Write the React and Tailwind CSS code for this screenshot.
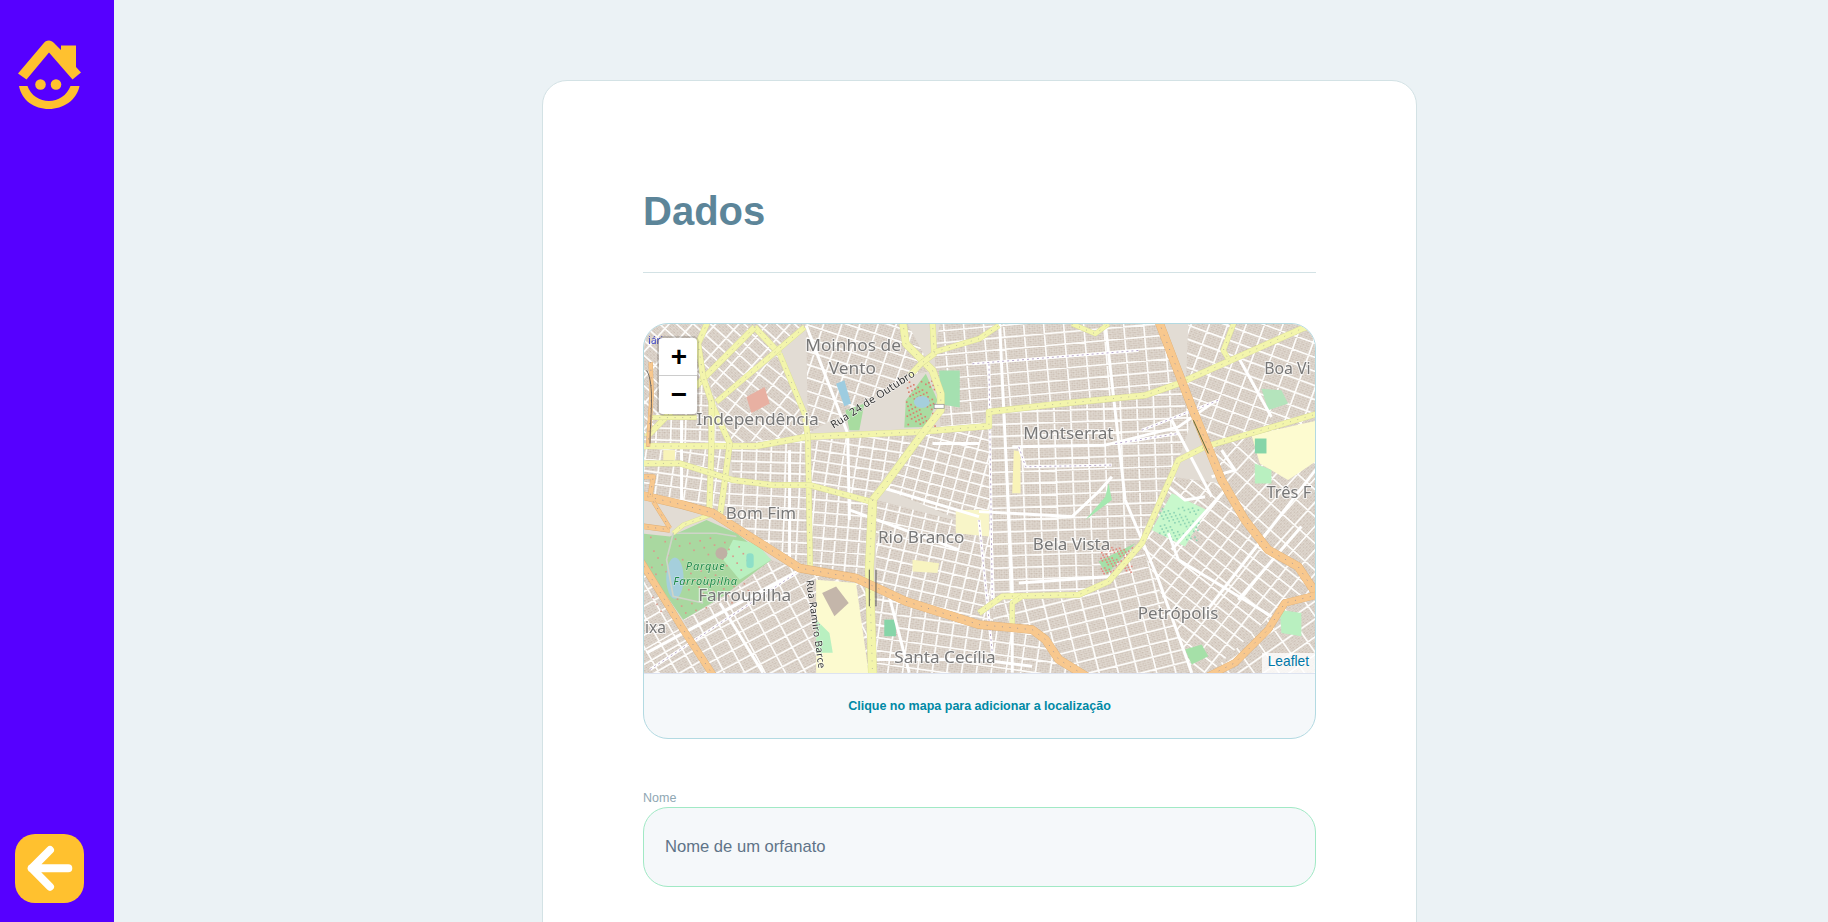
import React from 'react';

// map coordinates are 3x page pixels
// each district is a patch of the street grid bounded by the main roads
const districts = [
  { poly: '0,0 345,0 200,165 0,370', angle: 42, a: 52, b: 34 },
  { poly: '345,0 500,0 495,20 230,245 200,165', angle: 42, a: 50, b: 36 },
  { poly: '420,100 230,245 270,370 500,350 495,280', angle: 38, a: 54, b: 38 },
  { poly: '500,0 800,0 880,150 812,165 505,340', angle: 18, a: 52, b: 38 },
  { poly: '0,370 20,350 200,170 270,370', angle: 2, a: 44, b: 36 },
  { poly: '270,370 500,350 510,495 280,480', angle: 2, a: 44, b: 32 },
  { poly: '0,380 270,380 250,520 240,590 130,555 0,530', angle: 8, a: 44, b: 36 },
  { poly: '250,485 510,500 512,745 330,650 240,590', angle: 3, a: 42, b: 34 },
  { poly: '515,360 840,338 720,490 695,545 515,500', angle: 9, a: 42, b: 32 },
  { poly: '515,500 695,550 690,775 515,745', angle: 5, a: 36, b: 38 },
  { poly: '720,500 850,340 1050,320 1060,640', angle: 15, a: 38, b: 34 },
  { poly: '710,540 1060,630 1065,920 800,845 710,790', angle: 13, a: 40, b: 36 },
  { poly: '905,0 1560,0 1650,190 1520,225 1220,255 1050,275 1020,320 905,320 885,90', angle: -5, a: 60, b: 36 },
  { poly: '1050,275 1220,255 1520,225 1650,190 1660,300 1620,420 1580,510 1510,670 1410,785 1320,825 1090,830 1060,880', angle: -2, a: 50, b: 36 },
  { poly: '1070,840 1320,835 1410,795 1510,680 1560,780 1670,1075 1350,1075 1260,1020 1180,930 1060,920', angle: -14, a: 56, b: 38 },
  { poly: '1510,680 1600,470 1750,490 1890,690 1980,740 2040,820 1940,850 1790,1030 1700,1075 1670,1075', angle: 38, a: 48, b: 36 },
  { poly: '1650,0 2040,0 2040,280 1700,380 1640,260', angle: 20, a: 52, b: 40 },
  { poly: '1760,490 1700,380 2040,285 2040,820 1980,740 1890,690', angle: -48, a: 60, b: 48 },
  { poly: '0,740 130,930 225,1075 0,1075', angle: -30, a: 48, b: 38 },
  { poly: '130,900 260,830 395,720 480,750 650,780 690,800 690,1075 225,1075', angle: -28, a: 54, b: 38 },
  { poly: '700,800 1060,920 1180,940 1260,1020 1350,1075 700,1075', angle: 8, a: 44, b: 38 },
  { poly: '1940,850 2040,830 2040,1075 1700,1075', angle: -35, a: 62, b: 44 },
];

function centerOf(poly) {
  const pts = poly.split(' ').map((p) => p.split(',').map(Number));
  const xs = pts.map((p) => p[0]);
  const ys = pts.map((p) => p[1]);
  return [(Math.min(...xs) + Math.max(...xs)) / 2, (Math.min(...ys) + Math.max(...ys)) / 2];
}

function District({ d, i }) {
  const [cx, cy] = centerOf(d.poly);
  const R = 700;
  const lines = [];
  for (let x = -R; x <= R; x += d.a) lines.push(`M${cx + x} ${cy - R}V${cy + R}`);
  for (let y = -R; y <= R; y += d.b) lines.push(`M${cx - R} ${cy + y}H${cx + R}`);
  return (
    <g>
      <clipPath id={`district-${i}`}>
        <polygon points={d.poly} />
      </clipPath>
      <pattern id={`blocks-${i}`} width="15" height="13" patternUnits="userSpaceOnUse" patternTransform={`rotate(${d.angle})`}>
        <rect width="15" height="13" fill="#e9e4dd" />
        <rect x="1" y="1" width="6" height="5" fill="#cbbeb3" />
        <rect x="8" y="1" width="6" height="4" fill="#d2c7bc" />
        <rect x="1" y="7" width="5" height="5" fill="#d3c8be" />
        <rect x="7" y="7" width="7" height="5" fill="#c9bcb0" />
      </pattern>
      <polygon points={d.poly} fill={`url(#blocks-${i})`} />
      <g clipPath={`url(#district-${i})`}>
        <path d={lines.join('')} transform={`rotate(${d.angle} ${cx} ${cy})`} stroke="#fdfcfa" strokeWidth="5" fill="none" />
      </g>
    </g>
  );
}

const whiteRoads = [
  '500,15 625,340 630,600',
  '450,390 450,730',
  '125,300 125,540',
  '720,500 1020,590',
  '630,570 960,690',
  '880,370 1020,370',
  '20,1000 500,740',
  '240,850 370,1060',
  '750,830 810,1060',
  '690,1020 1020,1020 1180,1040',
  '1082,10 1120,800 1120,1060',
  '1120,380 1400,375 1620,320 1720,250',
  '1020,575 1300,590 1380,515 1420,470',
  '1400,10 1460,540 1560,780 1660,1060',
  '1140,790 1420,770',
  '1590,640 1620,720 1900,890',
  '1600,690 1760,510',
  '1700,880 2040,440',
  '1800,840 1990,620',
  '1800,110 1900,290',
  '1600,300 1720,530',
  '1750,390 1790,450 1720,470',
  '1590,500 1640,540 1700,530',
];

const parkPaths = [
  '100,640 80,720 100,830 190,850',
  '100,640 230,640 290,650',
];

const dottedStreets = [
  '1000,130 1500,90',
  '1050,130 1060,840',
  '1140,380 1160,440 1420,435',
  '1510,330 1740,240',
  '1430,370 1620,340',
  '1020,600 1060,1000',
  '30,1050 470,760',
];

const parks = [
  { points: '0,640 90,650 200,600 290,640 395,720 250,830 130,900 60,800 0,720', fill: '#a9d8a0' },
  { points: '280,660 350,670 395,720 300,780 250,720', fill: '#b9f0c0' },
  { points: '800,240 860,160 895,240 860,320 795,322', fill: '#a9dca1' },
  { points: '900,150 962,150 962,262 905,252', fill: '#a5e0b0' },
  { points: '618,270 675,250 660,330 630,330', fill: '#a8dca0' },
  { points: '1600,520 1705,570 1640,680 1540,630', fill: '#c8f8cc' },
  { points: '1410,490 1420,540 1340,600 1400,530', fill: '#a5e8b0' },
  { points: '1380,725 1490,670 1405,765', fill: '#a5e0a8' },
  { points: '1870,205 1930,210 1950,250 1890,270', fill: '#b4e4bc' },
  { points: '1640,990 1690,975 1710,1010 1660,1035', fill: '#a5e0a8' },
  { points: '1925,870 1990,880 1990,950 1930,940', fill: '#b9f0c0' },
  { points: '1850,430 1900,450 1900,490 1850,490', fill: '#b9f0c0' },
  { points: '530,900 570,940 580,1000 530,1000', fill: '#b9f0c0' },
];

// red and dark speckle of trees over the parks
const speckleAreas = [
  [30, 650, 330, 880, '#d99b8c'],
  [800, 180, 890, 320, '#d9806f'],
  [1385, 680, 1480, 760, '#e08c80'],
  [1560, 560, 1680, 660, '#8ed4b4'],
];
const speckles = [];
speckleAreas.forEach(([x0, y0, x1, y1, fill], a) => {
  for (let i = 0; i < 70; i++) {
    speckles.push({
      x: x0 + ((i * 37 + a * 11) % 97) / 97 * (x1 - x0),
      y: y0 + ((i * 61 + a * 29) % 89) / 89 * (y1 - y0),
      fill,
    });
  }
});

const schools = [
  { points: '530,780 650,790 690,1075 530,1075', fill: '#fcfacf' },
  { points: '1840,345 2040,300 2040,420 1950,480 1865,430', fill: '#fdfbd0' },
  { points: '950,570 1050,570 1050,650 950,640', fill: '#f8f5c8' },
  { points: '820,720 900,730 895,760 820,755', fill: '#f8f4c0' },
  { points: '1125,390 1145,395 1145,520 1120,520', fill: '#f9f3b8' },
  { points: '70,390 105,390 105,420 70,420', fill: '#f8f3b8' },
];

const yellowRoads = [
  { d: '0,378 350,378 500,350 840,335 1020,320 1050,318 1050,275 1220,255 1520,225 1620,190 1990,25 2040,10', w: 17 },
  { d: '700,540 740,490 850,340 905,270 905,220 880,150 800,70 790,0', w: 21 },
  { d: '880,0 885,100 845,130 812,165', w: 16 },
  { d: '885,95 1020,55 1080,15', w: 15 },
  { d: '420,100 495,280 505,350 512,745', w: 15 },
  { d: '345,20 420,100', w: 17 },
  { d: '345,20 200,165 20,350', w: 17 },
  { d: '495,20 230,245', w: 15 },
  { d: '205,0 175,70 190,170 220,260 270,370 250,520 240,590', w: 16 },
  { d: '215,240 215,380 208,585', w: 16 },
  { d: '0,430 120,430 280,480 400,495 510,495 695,545', w: 16 },
  { d: '35,292 170,292', w: 12 },
  { d: '100,640 130,615 210,585', w: 12 },
  { d: '1020,880 1090,830 1320,825 1410,785 1510,670 1580,510 1620,420 1700,380 2040,280', w: 16 },
  { d: '1120,920 1120,850 1150,830', w: 14 },
  { d: '1300,10 1370,40 1410,10', w: 13 },
  { d: '1790,0 1755,90 1770,115', w: 14 },
  { d: '700,540 690,750 700,1075', w: 25 },
];

const orangeRoads = [
  { d: '0,525 130,555 220,580 330,650 480,745 650,775 800,845 1020,915 1180,930 1220,960 1260,1020 1350,1075', w: 24 },
  { d: '0,720 130,930 225,1075', w: 20 },
  { d: '0,618 90,630', w: 15 },
  { d: '40,545 90,625', w: 11 },
  { d: '32,125 35,220 24,380', w: 11 },
  { d: '0,470 40,470 30,530', w: 13 },
  { d: '1560,0 1660,260 1750,480 1820,600 1890,690 1980,740 2040,830', w: 24 },
  { d: '1700,1075 1790,1030 1890,930 1940,850 2040,825', w: 20 },
];

const labels = [
  ['Moinhos de', 497, 92, 288],
  ['Vento', 568, 160, 142],
  ['Independência', 170, 313, 368],
  ['Bom Fim', 258, 596, 212],
  ['Rio Branco', 716, 668, 260],
  ['Farroupilha', 175, 845, 280],
  ['ixa', 15, 940, 63],
  ['Santa Cecília', 765, 1030, 305],
  ['Montserrat', 1153, 357, 272],
  ['Bela Vista', 1182, 690, 233],
  ['Petrópolis', 1498, 897, 242],
  ['Três F', 1885, 535, 135],
  ['Boa Vi', 1878, 160, 140],
];

function CityMap() {
  const halo = { paintOrder: 'stroke' };
  return (
    <svg viewBox="0 0 673 349" className="block h-[349px] w-full blur-[0.5px]">
      <g transform="translate(-4,-4) scale(0.33333)">
        <rect x="0" y="0" width="2040" height="1075" fill="#e2dcd4" />
        {districts.map((d, i) => <District key={d.poly} d={d} i={i} />)}
        {schools.map((s) => <polygon key={s.points} points={s.points} fill={s.fill} />)}
        {parks.map((p) => <polygon key={p.points} points={p.points} fill={p.fill} />)}
        {speckles.map((s, i) => <rect key={i} x={s.x} y={s.y} width="5" height="5" fill={s.fill} />)}

        <ellipse cx="105" cy="775" rx="26" ry="62" fill="#a5cfdc" />
        <ellipse cx="848" cy="245" rx="24" ry="18" fill="#a5cfdc" />
        <polygon points="590,190 615,180 635,250 615,258" fill="#9dcce0" />
        <rect x="320" y="700" width="22" height="45" rx="10" fill="#8ddfc8" />
        <circle cx="245" cy="700" r="18" fill="#bfb0a4" />
        <polygon points="320,230 375,200 390,250 335,278" fill="#e8b0a2" />
        <polygon points="1850,355 1885,355 1885,400 1850,400" fill="#86d5a8" />
        <polygon points="735,900 770,900 770,950 735,950" fill="#86d5a8" />
        <polygon points="548,820 590,800 628,850 585,890" fill="#c4b6aa" />

        {parkPaths.map((d) => <polyline key={d} points={d} fill="none" stroke="#cfd4c8" strokeWidth="5" />)}
        {whiteRoads.map((d) => <polyline key={d} points={d} fill="none" stroke="#ffffff" strokeWidth="9" strokeLinejoin="round" />)}
        {dottedStreets.map((d) => (
          <g key={d}>
            <polyline points={d} fill="none" stroke="#fff" strokeWidth="9" />
            <polyline points={d} fill="none" stroke="#b9a8cc" strokeWidth="3" strokeDasharray="6 9" />
          </g>
        ))}

        {yellowRoads.map((r) => (
          <g key={r.d}>
            <polyline points={r.d} fill="none" stroke="#d8dc96" strokeWidth={r.w + 2} strokeLinejoin="round" />
            <polyline points={r.d} fill="none" stroke="#f3f5ac" strokeWidth={r.w} strokeLinejoin="round" />
            <polyline points={r.d} fill="none" stroke="#b4b49c" strokeWidth="2.500" strokeDasharray="3 20" />
          </g>
        ))}
        {orangeRoads.map((r) => (
          <g key={r.d}>
            <polyline points={r.d} fill="none" stroke="#dcae76" strokeWidth={r.w + 2} strokeLinejoin="round" />
            <polyline points={r.d} fill="none" stroke="#f8c88e" strokeWidth={r.w} strokeLinejoin="round" />
            <polyline points={r.d} fill="none" stroke="#a89a98" strokeWidth="3" strokeDasharray="3 20" />
          </g>
        ))}

        <path d="M690 750V860M710 750V860" stroke="#555" strokeWidth="3" fill="none" />
        <path d="M1665 300L1710 400" stroke="#5d6a38" strokeWidth="3" fill="none" />
        <rect x="885" y="252" width="30" height="12" fill="#fff" stroke="#888" strokeWidth="2" />
        <path d="M20 150C45 190 30 300 30 370" stroke="#555" strokeWidth="2.500" fill="none" />

        {labels.map(([text, x, y, w]) => (
          <text
            key={text + x}
            x={x}
            y={y}
            textLength={w}
            lengthAdjust="spacingAndGlyphs"
            fontFamily="'Noto Sans', 'Open Sans', sans-serif"
            fontSize="48"
            fill="#777777"
            stroke="#ffffff"
            strokeOpacity="0.7"
            strokeWidth="6"
            style={halo}
          >
            {text}
          </text>
        ))}
        <text x="138" y="750" textLength="117" fontFamily="'Noto Sans', sans-serif" fontStyle="italic" fontSize="33" fill="#1f8a48" stroke="#ffffff" strokeOpacity="0.5" strokeWidth="3" style={halo}>Parque</text>
        <text x="100" y="795" textLength="192" fontFamily="'Noto Sans', sans-serif" fontStyle="italic" fontSize="33" fill="#1f8a48" stroke="#ffffff" strokeOpacity="0.5" strokeWidth="3" style={halo}>Farroupilha</text>
        <text x="0" y="0" transform="translate(582,326) rotate(-33)" textLength="295" fontFamily="'Noto Sans', sans-serif" fontSize="32" fill="#333" stroke="#ffffff" strokeOpacity="0.7" strokeWidth="4" style={halo}>Rua 24 de Outubro</text>
        <text x="0" y="0" transform="translate(500,782) rotate(82)" textLength="268" fontFamily="'Noto Sans', sans-serif" fontSize="30" fill="#333" stroke="#ffffff" strokeOpacity="0.7" strokeWidth="4" style={halo}>Rua Ramiro Barce</text>
        <text x="25" y="72" fontFamily="'Noto Sans', sans-serif" fontSize="30" fill="#3f48c8">iário</text>
      </g>
    </svg>
  );
}

function Logo() {
  return (
    <svg viewBox="0 0 63 69" className="h-[69px] w-[63px]" fill="#ffc12f">
      <path d="M0 33.500L25 4C28 -0.500 33 -0.500 36 3L43 10V5.500H58V27L63 32.500L54.500 39.500L31 12.500L8.500 39.500Z" />
      <circle cx="22.500" cy="44.500" r="5.300" />
      <circle cx="38" cy="44.500" r="5.300" />
      <path d="M1 46H9.500C12.500 55.500 22 61 31 61C40 61 49 55.500 52.500 46H61.500C58.500 60.500 45 69 31 69C16 69 4 60.500 1 46Z" />
    </svg>
  );
}

function BackArrow() {
  return (
    <svg viewBox="0 0 69 69" className="h-[69px] w-[69px]" fill="none" stroke="#ffffff" strokeWidth="8" strokeLinecap="round" strokeLinejoin="round">
      <path d="M35 16L16.700 34.300L35 52.700M16.700 34.300H53.300" />
    </svg>
  );
}

export default function App() {
  return (
    <div className="flex h-screen overflow-hidden bg-[#ebf2f5] font-['Liberation_Sans',Arial,sans-serif]">
      <aside className="flex h-full w-[114px] shrink-0 flex-col items-start justify-between bg-[#5600ff] pb-[19px] pl-[15px] pt-[40px]">
        <div className="pl-[3px]">
          <Logo />
        </div>
        <button className="flex h-[69px] w-[69px] items-center justify-center rounded-[20px] bg-[#ffc12f]">
          <BackArrow />
        </button>
      </aside>

      <main className="flex-1">
        <div className="ml-[428px] mt-[80px] w-[875px] rounded-[25px] border border-[#d3e2e5] bg-white px-[100px] pb-[100px] pt-[107px]">
          <h2 className="border-b border-[#d3e2e5] pb-[38px] text-[40px] font-bold leading-[46px] text-[#5c8599]">Dados</h2>

          <div className="mt-[50px] overflow-hidden rounded-[25px] border border-[#b3dae2] bg-[#f5f8fa]">
            <div className="relative h-[349px]">
              <CityMap />
              <div className="absolute left-[13px] top-[12px] w-[42px] overflow-hidden rounded-[6px] border-2 border-black/15 bg-clip-padding">
                <div className="flex h-[38px] items-center justify-center border-b border-[#ccc] bg-white pl-[2px] text-[28px] font-bold leading-none text-black">+</div>
                <div className="flex h-[38px] items-center justify-center bg-white pl-[2px] text-[28px] font-bold leading-none text-black">−</div>
              </div>
              <div className="absolute bottom-0 right-0 bg-white/80 px-[6px] pb-[2px] text-[13.750px] leading-[18px] text-[#0078a8]">Leaflet</div>
            </div>
            <footer className="flex h-[65px] items-center justify-center border-t border-[#dde3f0] text-[12.500px] font-bold text-[#0089a5]">
              Clique no mapa para adicionar a localização
            </footer>
          </div>

          <div className="mt-[52px]">
            <label className="mb-[2px] block text-[12.500px] leading-[14px] text-[#8fa7b3]">Nome</label>
            <input
              defaultValue="Nome de um orfanato"
              className="block h-[80px] w-full rounded-[25px] border border-[#a1e9c5] bg-[#f5f8fa] px-[21px] text-[16.600px] text-[#5f7488] outline-none"
            />
          </div>
        </div>
      </main>
    </div>
  );
}
